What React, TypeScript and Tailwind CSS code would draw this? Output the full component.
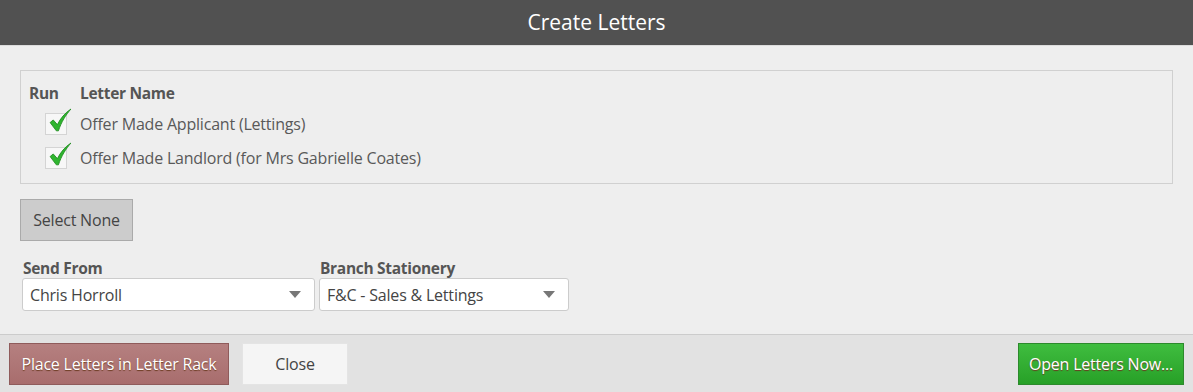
import React from "react";

const font = { fontFamily: "'Open Sans', 'Liberation Sans', sans-serif" };

function Tick() {
    return (
        <div className="relative w-[22px] h-[22px] border border-[#d4d4d4] bg-[#f7f7f7] shrink-0">
            <svg
                className="absolute left-[1px] top-[-6px]"
                width="27"
                height="27"
                viewBox="0 0 26 26"
            >
                <path
                    d="M3 14 L6 11.5 L10 16 C13 10 17 5 23 1 C18 7 14 13 11 22 L9 22 Z"
                    fill="#2fb52f"
                    stroke="#1e8a1e"
                    strokeWidth="0.8"
                    strokeLinejoin="round"
                />
            </svg>
        </div>
    );
}

function Caret() {
    return (
        <svg width="12" height="7" viewBox="0 0 12 7">
            <path d="M0 0 L12 0 L6 7 Z" fill="#777" />
        </svg>
    );
}

type SelectProps = { label: string; value: string; width: string };

function FakeSelect({ label, value, width }: SelectProps) {
    return (
        <div className={"flex flex-col " + width}>
            <span className="text-[15.5px] font-bold text-[#555] leading-[20px] pl-[1px] tracking-[-0.3px]">
                {label}
            </span>
            <div className="flex items-center justify-between h-[33px] bg-white border border-[#cccccc] rounded-[3px] pl-[7px] pr-[13px]">
                <span className="text-[16px] tracking-[-0.2px] text-[#444]">{value}</span>
                <Caret />
            </div>
        </div>
    );
}

export default function App() {
    const letters = [
        "Offer Made Applicant (Lettings)",
        "Offer Made Landlord (for Mrs Gabrielle Coates)",
    ];

    return (
        <div className="w-[1193px] h-[392px] flex flex-col bg-[#eeeeee]" style={font}>
            <div className="h-[46px] bg-[#515151] flex items-center justify-center border-b border-[#dcdcdc]">
                <h1 className="text-white text-[21px]">Create Letters</h1>
            </div>

            <div className="flex-1 px-[20px] pt-[24px]">
                <div className="border border-[#d0d0d0] h-[114px] pt-[12px] px-[8px]">
                    <div className="flex text-[15.5px] font-bold text-[#555] leading-[20px] tracking-[-0.3px]">
                        <span className="w-[51px]">Run</span>
                        <span>Letter Name</span>
                    </div>
                    <div className="flex flex-col mt-[4px]">
                        {letters.map((name) => (
                            <div key={name} className="flex items-center h-[34px]">
                                <div className="w-[51px] pl-[16px]">
                                    <Tick />
                                </div>
                                <span className="text-[16px] tracking-[-0.2px] text-[#595959]">{name}</span>
                            </div>
                        ))}
                    </div>
                </div>

                <button className="mt-[15px] h-[42px] w-[113px] bg-[#cccccc] border border-[#aaaaaa] text-[16px] tracking-[-0.2px] text-[#444]">
                    Select None
                </button>

                <div className="flex gap-[4px] mt-[17px] pl-[2px]">
                    <FakeSelect label="Send From" value="Chris Horroll" width="w-[293px]" />
                    <FakeSelect label="Branch Stationery" value="F&C - Sales & Lettings" width="w-[250px]" />
                </div>
            </div>

            <div className="h-[58px] bg-[#e2e2e2] border-t border-[#cccccc] flex items-start pt-[8px] px-[9px]">
                <button className="h-[42px] w-[220px] bg-gradient-to-b from-[#b58080] to-[#a86d6d] border border-[#8f5b5b] text-white text-[16px] tracking-[-0.2px] [text-shadow:0_1px_1px_#6b3a20]">
                    Place Letters in Letter Rack
                </button>
                <button className="ml-[13px] h-[42px] w-[106px] bg-[#f5f5f5] border border-[#e4e4e4] text-[16px] tracking-[-0.2px] text-[#444]">
                    Close
                </button>
                <button className="ml-auto h-[42px] w-[166px] bg-gradient-to-b from-[#3fbd3f] to-[#27a027] border border-[#2c8a2c] text-white text-[16px] tracking-[-0.2px] [text-shadow:0_1px_1px_#6b3a20]">
                    Open Letters Now...
                </button>
            </div>
        </div>
    );
}
